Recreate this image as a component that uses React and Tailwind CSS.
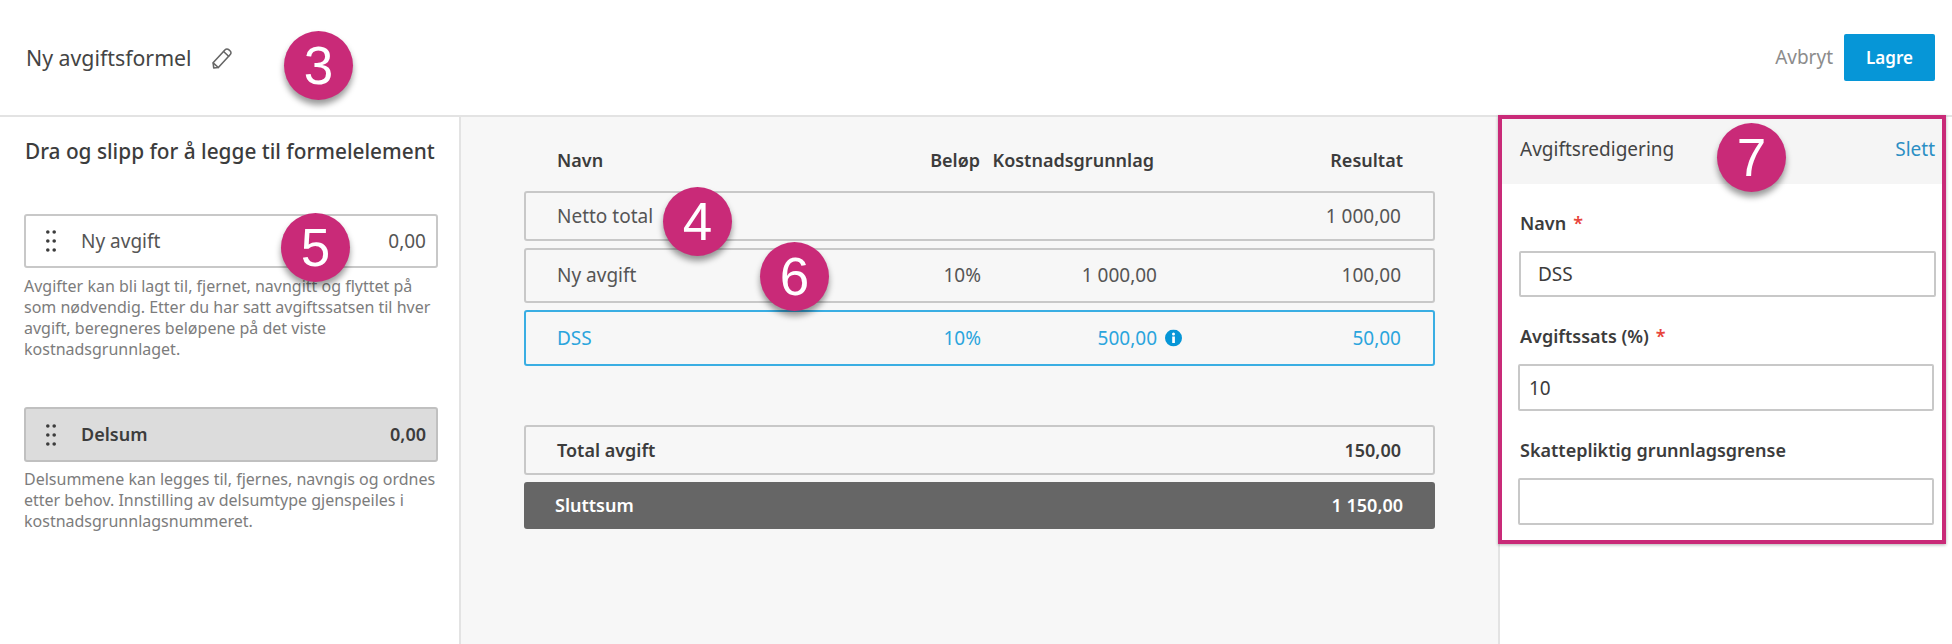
import React from 'react';

const Badge = ({ n, className }) => (
  <div className={`absolute z-10 w-[69px] h-[69px] rounded-full bg-[#c92a78] text-white flex items-center justify-center text-[53px] leading-none shadow-[0_5px_6px_rgba(0,0,0,0.4)] font-['Liberation_Sans',sans-serif] ${className}`}>
    {n}
  </div>
);

const Grip = () => (
  <svg width="10" height="22" viewBox="0 0 10 22" className="fill-[#3c3c3c] shrink-0">
    <circle cx="1.8" cy="2" r="1.8" />
    <circle cx="8.2" cy="2" r="1.8" />
    <circle cx="1.8" cy="11" r="1.8" />
    <circle cx="8.2" cy="11" r="1.8" />
    <circle cx="1.8" cy="20" r="1.8" />
    <circle cx="8.2" cy="20" r="1.8" />
  </svg>
);

const Pencil = () => (
  <svg width="22" height="22" viewBox="0 0 21 21" fill="none" stroke="#666" strokeWidth="1.5" strokeLinejoin="round" strokeLinecap="round">
    <path d="M2 15 L13.5 2.6 a2.4 2.4 0 0 1 3.4 -0.1 l1.4 1.3 a2.4 2.4 0 0 1 0.1 3.4 L7 19.6 L2.6 20 Z" />
    <path d="M2.3 15.4 L7 19.6" />
    <path d="M12 4.3 L16.8 8.8" />
  </svg>
);

const Info = () => (
  <svg width="17" height="17" viewBox="0 0 17 17" className="absolute left-full top-1/2 -translate-y-1/2 ml-[8px]">
    <circle cx="8.5" cy="8.5" r="8.5" fill="#0696d7" />
    <rect x="7.2" y="7" width="2.7" height="6.5" fill="#fff" />
    <circle cx="8.5" cy="4.6" r="1.5" fill="#fff" />
  </svg>
);

const Row = ({ name, amount, base, result, info, className }) => (
  <div className={`flex items-center rounded-[3px] pl-[31px] pr-[32px] whitespace-nowrap ${className}`}>
    <div className="flex-1">{name}</div>
    <div className="w-[60px] text-right">{amount}</div>
    <div className="w-[176px] text-right">
      <span className="relative">
        {base}
        {info && <Info />}
      </span>
    </div>
    <div className="w-[244px] text-right">{result}</div>
  </div>
);

const Field = ({ label, required, value, inputClass, className }) => (
  <div className={className}>
    <div className="h-[24px] leading-[24px] pl-[2px] text-[18px] font-semibold text-[#3c3c3c]">
      {label}
      {required && <span className="text-[#e8453c] ml-[7px]">*</span>}
    </div>
    <input
      readOnly
      value={value}
      className={`block mt-[16px] border-2 border-[#c8c8c8] rounded-[2px] bg-white text-[19px] text-[#3c3c3c] outline-none ${inputClass}`}
    />
  </div>
);

export default function App() {
  return (
    <div className="relative w-[1952px] h-[644px] overflow-hidden flex flex-col bg-white font-['Noto_Sans',sans-serif] text-[#3c3c3c]">
      {/* Header */}
      <header className="h-[117px] shrink-0 border-b-2 border-[#e3e3e3] flex items-center justify-between pl-[26px] pr-[17px]">
        <div className="flex items-center gap-[19px]">
          <span className="text-[21.3px] text-[#444]">Ny avgiftsformel</span>
          <Pencil />
        </div>
        <div className="flex items-center gap-[11px]">
          <span className="text-[19px] text-[#8c8c8c]">Avbryt</span>
          <button className="w-[91px] h-[47px] bg-[#0696d7] rounded-[2px] text-white text-[17px] font-semibold">Lagre</button>
        </div>
      </header>
      <Badge n="3" className="left-[284px] top-[31px]" />

      <div className="flex flex-1 min-h-0">
        {/* Left panel */}
        <aside className="relative w-[461px] shrink-0 border-r-2 border-[#e3e3e3] pl-[24px] pr-[21px] pt-[20px]">
          <h2 className="h-[28px] leading-[28px] pl-[1px] text-[20.8px] font-medium text-[#3c3c3c] whitespace-nowrap">Dra og slipp for å legge til formelelement</h2>
          <div className="mt-[49px] h-[54px] border-2 border-[#c8c8c8] rounded-[3px] flex items-center justify-between pl-[20px] pr-[10px] text-[19px] text-[#555]">
            <div className="flex items-center gap-[25px]">
              <Grip />
              <span>Ny avgift</span>
            </div>
            <span>0,00</span>
          </div>
          <p className="mt-[8px] text-[16px] leading-[21px] text-[#7c7c7c] whitespace-nowrap">
            Avgifter kan bli lagt til, fjernet, navngitt og flyttet på<br />
            som nødvendig. Etter du har satt avgiftssatsen til hver<br />
            avgift, beregneres beløpene på det viste<br />
            kostnadsgrunnlaget.
          </p>
          <div className="mt-[47px] h-[55px] border-2 border-[#c0c0c0] bg-[#dcdcdc] rounded-[3px] flex items-center justify-between pl-[20px] pr-[10px] text-[18px] font-semibold text-[#3c3c3c]">
            <div className="flex items-center gap-[25px]">
              <Grip />
              <span>Delsum</span>
            </div>
            <span>0,00</span>
          </div>
          <p className="mt-[7px] text-[16px] leading-[21px] text-[#7c7c7c] whitespace-nowrap">
            Delsummene kan legges til, fjernes, navngis og ordnes<br />
            etter behov. Innstilling av delsumtype gjenspeiles i<br />
            kostnadsgrunnlagsnummeret.
          </p>
          <Badge n="5" className="left-[281px] top-[96px]" />
        </aside>

        {/* Formula table */}
        <main className="relative flex-1 bg-[#f7f7f7] pt-[31px] pl-[63px] pr-[64px] text-[19px] text-[#555]">
          <div className="flex items-center h-[24px] pl-[33px] pr-[32px] text-[18px] font-semibold text-[#3c3c3c] whitespace-nowrap">
            <div className="flex-1">Navn</div>
            <div className="w-[60px] text-right">Beløp</div>
            <div className="w-[174px] text-right">Kostnadsgrunnlag</div>
            <div className="w-[249px] text-right">Resultat</div>
          </div>
          <div className="mt-[19px] flex flex-col gap-[7px]">
            <Row name="Netto total" result="1 000,00" className="h-[50px] border-2 border-[#c8c8c8]" />
            <Row name="Ny avgift" amount="10%" base="1 000,00" result="100,00" className="h-[55px] border-2 border-[#c8c8c8]" />
            <Row name="DSS" amount="10%" base="500,00" result="50,00" info className="h-[56px] border-2 border-[#3aaee3] text-[#2ba5dd]" />
          </div>
          <div className="mt-[59px] flex flex-col gap-[7px] text-[18px] font-semibold">
            <Row name="Total avgift" result="150,00" className="h-[50px] border-2 border-[#c8c8c8] text-[#3c3c3c]" />
            <Row name="Sluttsum" result="1 150,00" className="h-[47px] bg-[#666666] text-white" />
          </div>
          <Badge n="4" className="left-[202px] top-[70px]" />
          <Badge n="6" className="left-[299px] top-[125px]" />
        </main>

        {/* Editor */}
        <aside className="relative w-[454px] shrink-0 border-l-2 border-[#e3e3e3] -ml-[1px]">
          <div className="relative -mt-[2px] -ml-[2px] w-[448px] h-[429px] border-4 border-[#c92a78] shadow-[0_1px_3px_rgba(0,0,0,0.3)]">
            <div className="h-[65px] bg-[#f5f5f5] flex items-center justify-between pl-[18px] pr-[7px] pb-[4px] text-[19px]">
              <span className="text-[#444]">Avgiftsredigering</span>
              <span className="text-[#2b8fc4]">Slett</span>
            </div>
            <div className="pl-[16px] pt-[27px]">
              <Field label="Navn" required value="DSS" inputClass="ml-[1px] w-[417px] h-[46px] pl-[17px]" />
              <Field label="Avgiftssats (%)" required value="10" className="mt-[27px]" inputClass="w-[416px] h-[47px] pl-[9px]" />
              <Field label="Skattepliktig grunnlagsgrense" value="" className="mt-[27px]" inputClass="w-[416px] h-[47px]" />
            </div>
            <Badge n="7" className="left-[215px] top-[4px]" />
          </div>
        </aside>
      </div>
    </div>
  );
}
